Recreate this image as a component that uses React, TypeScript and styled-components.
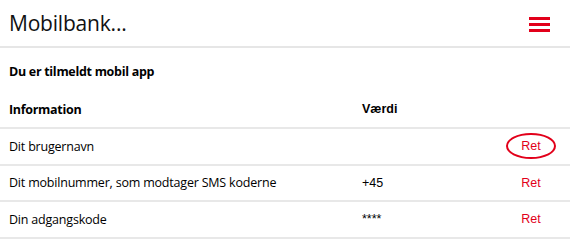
import React from 'react';
import styled, { createGlobalStyle } from 'styled-components';

const GlobalStyle = createGlobalStyle`
  body {
    margin: 0;
    background: #ffffff;
    color: #000000;
    font-family: 'Open Sans', 'Noto Sans', sans-serif;
  }
`;

const Page = styled.div`
  width: 570px;
  background: #ffffff;
`;

const Header = styled.header`
  display: flex;
  align-items: center;
  justify-content: space-between;
  padding: 0 20px 0 9px;
  border-bottom: 2px solid #e6e6e6;
  box-sizing: border-box;
  height: 48px;
`;

const Title = styled.h1`
  margin: 0;
  font-size: 21px;
  font-weight: 500;
  letter-spacing: -0.2px;
  color: #111111;
`;

const MenuButton = styled.button`
  display: flex;
  flex-direction: column;
  gap: 3px;
  padding: 0;
  margin-top: 2px;
  border: none;
  background: none;
`;

const MenuBar = styled.span`
  display: block;
  width: 21px;
  height: 3px;
  background: #e2001a;
`;

const Intro = styled.p`
  margin: 0;
  padding: 15px 9px 0;
  height: 38px;
  box-sizing: border-box;
  font-size: 12.5px;
  font-weight: 700;
  letter-spacing: -0.3px;
  line-height: 18px;
`;

const Row = styled.div<{ $head?: boolean }>`
  display: grid;
  grid-template-columns: 353px 138px 62px;
  align-items: center;
  padding-left: 9px;
  height: ${(p) => (p.$head ? '43px' : '36.5px')};
  box-sizing: border-box;
  border-bottom: 2px solid #e8e8e8;
  padding-top: ${(p) => (p.$head ? '5px' : '0')};
`;

const Label = styled.span<{ $bold?: boolean }>`
  font-size: 12.5px;
  font-weight: ${(p) => (p.$bold ? 700 : 400)};
  letter-spacing: ${(p) => (p.$bold ? '-0.3px' : '-0.2px')};
`;

const Value = styled.span<{ $bold?: boolean }>`
  font-family: 'Liberation Sans', Arial, sans-serif;
  font-size: 12.5px;
  font-weight: ${(p) => (p.$bold ? 700 : 400)};
`;

const Edit = styled.a<{ $circled?: boolean }>`
  justify-self: center;
  font-family: 'Liberation Sans', Arial, sans-serif;
  font-size: 12.5px;
  color: #e2001a;
  text-decoration: none;
  padding: 4px 13px;
  border-radius: 50%;
  border: 2px solid ${(p) => (p.$circled ? '#e2001a' : 'transparent')};
`;

const rows = [
  { label: 'Dit brugernavn', value: '', circled: true },
  { label: 'Dit mobilnummer, som modtager SMS koderne', value: '+45' },
  { label: 'Din adgangskode', value: '****' },
];

export default function App() {
  return (
    <Page>
      <GlobalStyle />
      <Header>
        <Title>Mobilbank...</Title>
        <MenuButton aria-label="Menu">
          <MenuBar />
          <MenuBar />
          <MenuBar />
        </MenuButton>
      </Header>
      <Intro>Du er tilmeldt mobil app</Intro>
      <Row $head>
        <Label $bold>Information</Label>
        <Value $bold>Værdi</Value>
        <span />
      </Row>
      {rows.map((row) => (
        <Row key={row.label}>
          <Label>{row.label}</Label>
          <Value>{row.value}</Value>
          <Edit href="#" $circled={row.circled}>
            Ret
          </Edit>
        </Row>
      ))}
    </Page>
  );
}
